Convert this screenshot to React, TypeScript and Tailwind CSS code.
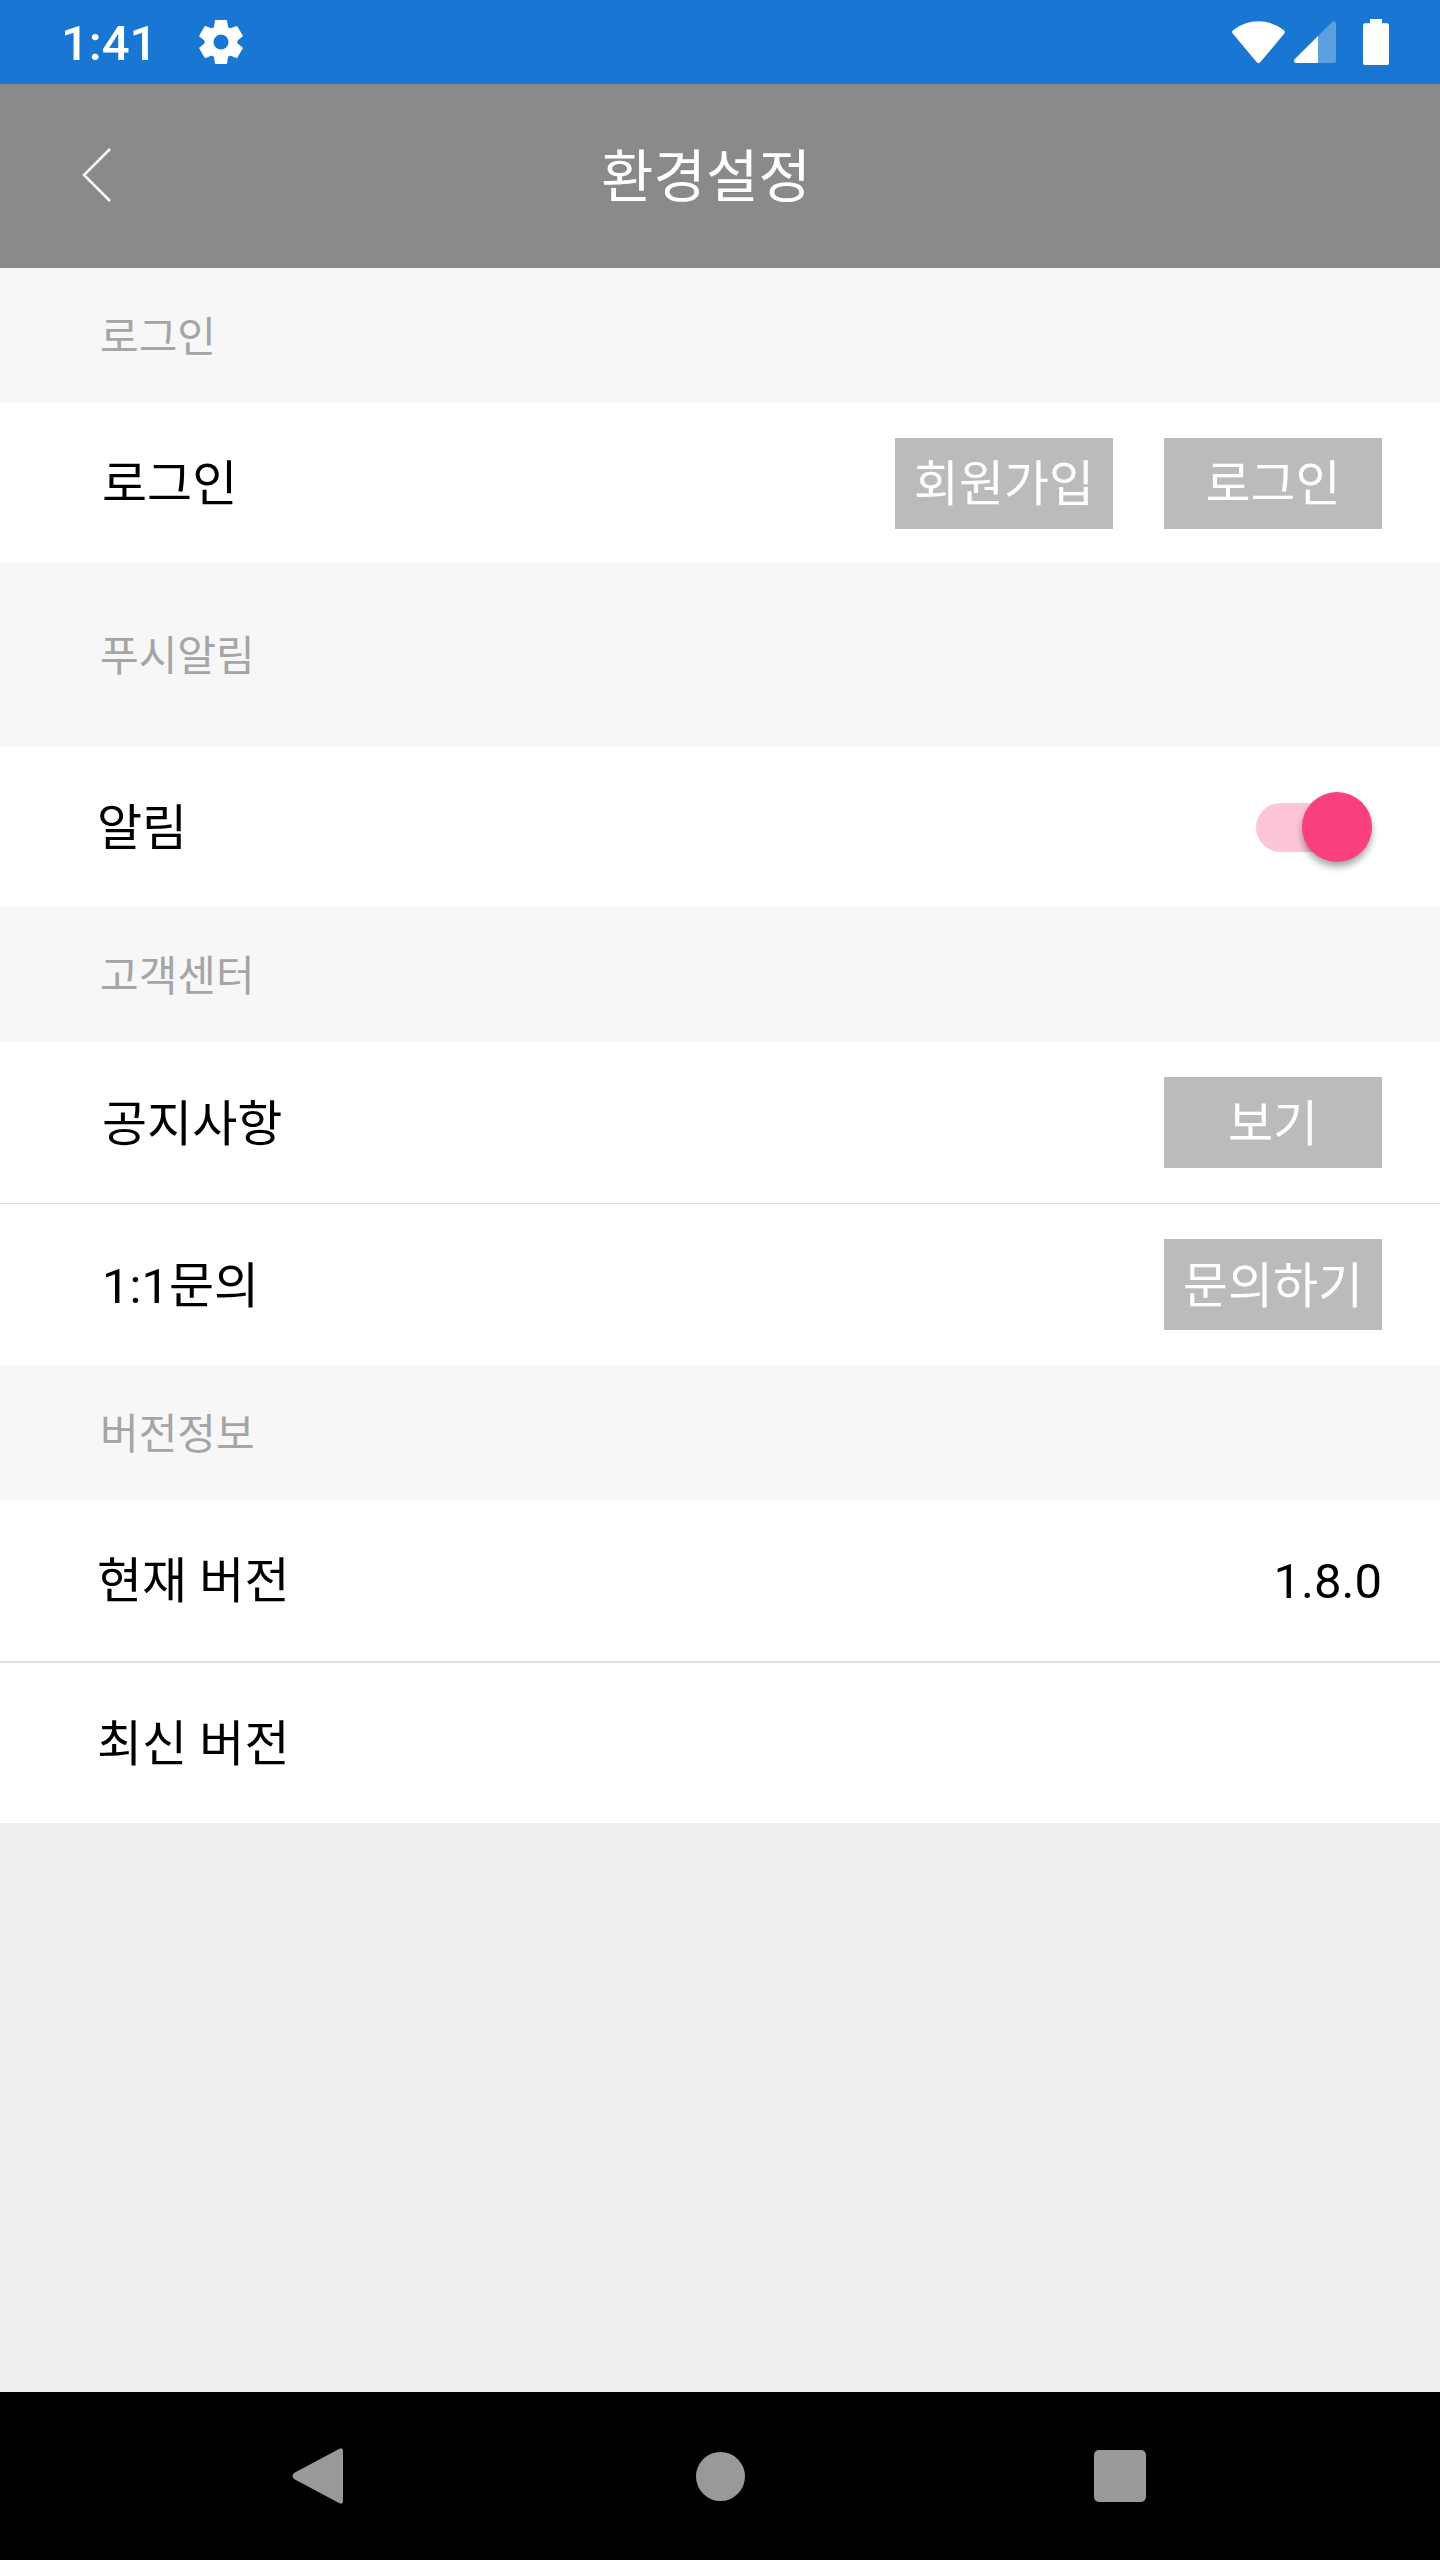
import { useState } from "react";
import type { ReactNode } from "react";

const GearIcon = () => (
    <svg viewBox="0 0 134 134" className="w-11 h-11" fill="white" aria-hidden="true">
      <defs>
        <mask id="gear-hole">
          <rect width="134" height="134" fill="white" />
          <circle cx="67" cy="67" r="23" fill="black" />
        </mask>
      </defs>
      <g mask="url(#gear-hole)">
        <circle cx="67" cy="67" r="50" />
        {[0, 60, 120, 180, 240, 300].map((angle) => (
            <path
                key={angle}
                d="M51 0 H83 Q85 0 85.500 2 L91 37 H43 L48.500 2 Q49 0 51 0 Z"
                transform={`rotate(${angle} 67 67)`}
            />
        ))}
      </g>
    </svg>
);

const WifiIcon = () => (
    <svg viewBox="0 0 160 130" className="w-[53px] h-[43px]" fill="white" aria-hidden="true">
      <path d="M4 27 Q38 1 80 1 T156 27 Q162 32 158 38 L86 124 Q80 131 74 124 L2 38 Q-2 32 4 27 Z" />
    </svg>
);

const SignalIcon = () => (
    <svg viewBox="0 0 126 126" className="w-[42px] h-[42px]" fill="white" aria-hidden="true">
      <path d="M72 45 L115 2 Q126 -3 126 8 V120 Q126 126 120 126 H72 Z" fillOpacity="0.3" />
      <path d="M72 45 L2 115 Q-4 126 8 126 H72 Z" />
    </svg>
);

const BatteryIcon = () => (
    <svg viewBox="0 0 78 138" className="w-[26px] h-[46px]" fill="white" aria-hidden="true">
      <path d="M21 0 H57 V13 H73 Q78 13 78 18 V133 Q78 138 73 138 H5 Q0 138 0 133 V18 Q0 13 5 13 H21 Z" />
    </svg>
);

const StatusBar = () => (
    <div className="flex items-center justify-between h-[84px] pl-[61px] pr-[51px] bg-[#1976d3] text-white">
      <div className="flex items-center gap-[42px]">
        <span className="pt-1 text-[49px] leading-[56px] font-medium">1:41</span>
        <GearIcon />
      </div>
      <div className="flex items-center">
        <WifiIcon />
        <div className="flex items-center gap-[27px] pl-[9px]">
          <SignalIcon />
          <BatteryIcon />
        </div>
      </div>
    </div>
);

const Header = () => (
    <header className="flex items-center h-[184px] bg-[#8a8a8a] text-white">
      <button type="button" aria-label="뒤로" className="flex items-center w-[168px] h-full pl-[80px]">
        <svg viewBox="0 0 32 56" className="w-8 h-14" fill="none" stroke="white" strokeWidth="2.5">
          <path d="M30 1 L4 27 L30 53" />
        </svg>
      </button>
      <h1 className="flex-1 pt-1 text-center text-[57px] leading-[64px]">환경설정</h1>
      <div className="w-[196px]" />
    </header>
);

const SectionTitle = ({ children, tall }: { children: ReactNode; tall?: boolean }) => (
    <h2
        className={`flex items-center pt-1 pl-[100px] bg-[#f7f7f7] text-[42px] leading-[48px] text-[#a5a5a5] ${
            tall ? "h-[184px]" : "h-[135px]"
        }`}
    >
      {children}
    </h2>
);

const Row = ({
               label,
               htmlFor,
               wide,
               children,
             }: {
  label: string;
  htmlFor?: string;
  wide?: boolean;
  children?: ReactNode;
}) => (
    <div
        className={`flex flex-1 items-center justify-between min-h-[160px] pr-[58px] bg-white text-[49px] leading-[56px] text-black ${
            wide ? "pl-[97px]" : "pl-[102px]"
        }`}
    >
      {htmlFor ? (
          <label htmlFor={htmlFor} className="pt-1">{label}</label>
      ) : (
          <span className="pt-1">{label}</span>
      )}
      {children}
    </div>
);

const RowButton = ({ children }: { children: ReactNode }) => (
    <button type="button" className="w-[218px] h-[91px] pt-1 bg-[#bbbbbb] text-white text-center whitespace-nowrap">
      {children}
    </button>
);

const NavBar = () => (
    <nav className="h-[168px] bg-black">
      <div className="grid grid-cols-3 w-5/6 h-full mx-auto">
        <button type="button" aria-label="이전" className="flex items-center justify-center">
          <svg viewBox="0 0 56 56" className="w-14 h-14" fill="#999999">
            <path d="M2 25 L47 1 Q51 -1 51 3 V53 Q51 57 47 55 L2 31 Q-1 28 2 25 Z" />
          </svg>
        </button>
        <button type="button" aria-label="홈" className="flex items-center justify-center">
          <span className="w-[49px] h-[49px] rounded-full bg-[#999999]" />
        </button>
        <button type="button" aria-label="최근 앱" className="flex items-center justify-center">
          <span className="w-[52px] h-[52px] rounded-[5px] bg-[#999999]" />
        </button>
      </div>
    </nav>
);

const App = () => {
  const [push, setPush] = useState(true);

  return (
      <div className="flex flex-col min-h-screen bg-[#eeeeee] font-[Roboto,'Noto_Sans_CJK_KR',sans-serif]">
        <StatusBar />
        <Header />
        <main className="flex-1">
          <section>
            <SectionTitle>로그인</SectionTitle>
            <Row label="로그인">
              <div className="flex gap-[51px]">
                <RowButton>회원가입</RowButton>
                <RowButton>로그인</RowButton>
              </div>
            </Row>
          </section>
          <section>
            <SectionTitle tall>푸시알림</SectionTitle>
            <Row label="알림" htmlFor="push" wide>
              <div className="flex pr-[10px]">
                <input
                    id="push"
                    type="checkbox"
                    role="switch"
                    checked={push}
                    onChange={(e) => setPush(e.target.checked)}
                    className="appearance-none flex items-center justify-start checked:justify-end w-[116px] h-[49px] rounded-full bg-gray-300 checked:bg-[#fdc5d8] before:content-[''] before:shrink-0 before:w-[70px] before:h-[70px] before:rounded-full before:bg-gray-50 checked:before:bg-[#f93f7d] before:shadow-[0_5px_7px_rgba(0,0,0,0.35)]"
                />
              </div>
            </Row>
          </section>
          <section>
            <SectionTitle>고객센터</SectionTitle>
            <div className="flex flex-col min-h-[323px] divide-y divide-[#e0e0e0]">
              <Row label="공지사항">
                <RowButton>보기</RowButton>
              </Row>
              <Row label="1:1문의">
                <RowButton>문의하기</RowButton>
              </Row>
            </div>
          </section>
          <section>
            <SectionTitle>버전정보</SectionTitle>
            <div className="flex flex-col min-h-[323px] divide-y-2 divide-[#e0e0e0]">
              <Row label="현재 버전" wide>
                <span className="pt-1">1.8.0</span>
              </Row>
              <Row label="최신 버전" wide />
            </div>
          </section>
        </main>
        <NavBar />
      </div>
  );
};

export default App;
